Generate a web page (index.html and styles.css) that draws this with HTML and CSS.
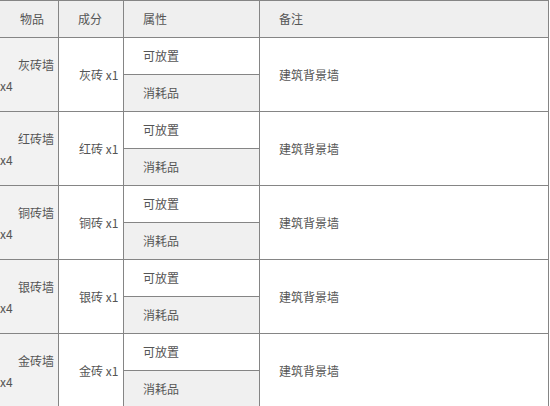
FILE: index.html
```html
<!DOCTYPE html>
<html lang="zh">
<head>
<meta charset="utf-8">
<link rel="stylesheet" href="styles.css">
</head>
<body>
<div class="view">
<table class="items">
  <colgroup>
    <col class="c-item"><col class="c-mat"><col class="c-attr"><col class="c-note">
  </colgroup>
  <thead>
    <tr><th class="h-item">物品</th><th>成分</th><th>属性</th><th>备注</th></tr>
  </thead>
  <tbody>
    <tr><td class="item" rowspan="2"><div class="name">灰砖墙</div><div class="qty">x4</div></td><td class="mat" rowspan="2">灰砖 x1</td><td class="attr">可放置</td><td class="note" rowspan="2">建筑背景墙</td></tr>
    <tr><td class="attr alt">消耗品</td></tr>
    <tr><td class="item" rowspan="2"><div class="name">红砖墙</div><div class="qty">x4</div></td><td class="mat" rowspan="2">红砖 x1</td><td class="attr">可放置</td><td class="note" rowspan="2">建筑背景墙</td></tr>
    <tr><td class="attr alt">消耗品</td></tr>
    <tr><td class="item" rowspan="2"><div class="name">铜砖墙</div><div class="qty">x4</div></td><td class="mat" rowspan="2">铜砖 x1</td><td class="attr">可放置</td><td class="note" rowspan="2">建筑背景墙</td></tr>
    <tr><td class="attr alt">消耗品</td></tr>
    <tr><td class="item" rowspan="2"><div class="name">银砖墙</div><div class="qty">x4</div></td><td class="mat" rowspan="2">银砖 x1</td><td class="attr">可放置</td><td class="note" rowspan="2">建筑背景墙</td></tr>
    <tr><td class="attr alt">消耗品</td></tr>
    <tr><td class="item" rowspan="2"><div class="name">金砖墙</div><div class="qty">x4</div></td><td class="mat" rowspan="2">金砖 x1</td><td class="attr">可放置</td><td class="note" rowspan="2">建筑背景墙</td></tr>
    <tr><td class="attr alt">消耗品</td></tr>
  </tbody>
</table>
</div>
</body>
</html>
```
FILE: styles.css
```css
html, body {
  margin: 0;
  padding: 0;
  background: #ffffff;
}
.view {
  width: 550px;
  height: 406px;
  overflow: hidden;
}
.items {
  border-collapse: collapse;
  table-layout: fixed;
  width: 597px;
  margin-left: -49px;
  font-family: "Microsoft YaHei", "Noto Sans CJK SC", "Noto Sans", sans-serif;
  font-size: 12px;
  color: #555555;
}
.c-item { width: 107px; }
.c-mat { width: 65px; }
.c-attr { width: 136px; }
.c-note { width: 289px; }
.items th, .items td {
  border: 1px solid #858585;
  height: 36px;
  padding: 0 0 0 19px;
  text-align: left;
  vertical-align: middle;
  font-weight: normal;
  line-height: 20px;
}
.items th {
  background: #efefef;
}
.items th.h-item {
  padding-left: 68px;
}
.items td.item {
  background: #f2f2f2;
  padding: 0 4px 0 0;
}
.item .name {
  text-align: right;
  line-height: 21px;
}
.item .qty {
  text-align: left;
  padding-left: 48px;
  line-height: 21px;
}
.items td.mat {
  padding-left: 20px;
}
.items td.alt {
  background: #f0f0f0;
}
.items td.note {
  background: #ffffff;
}
```
